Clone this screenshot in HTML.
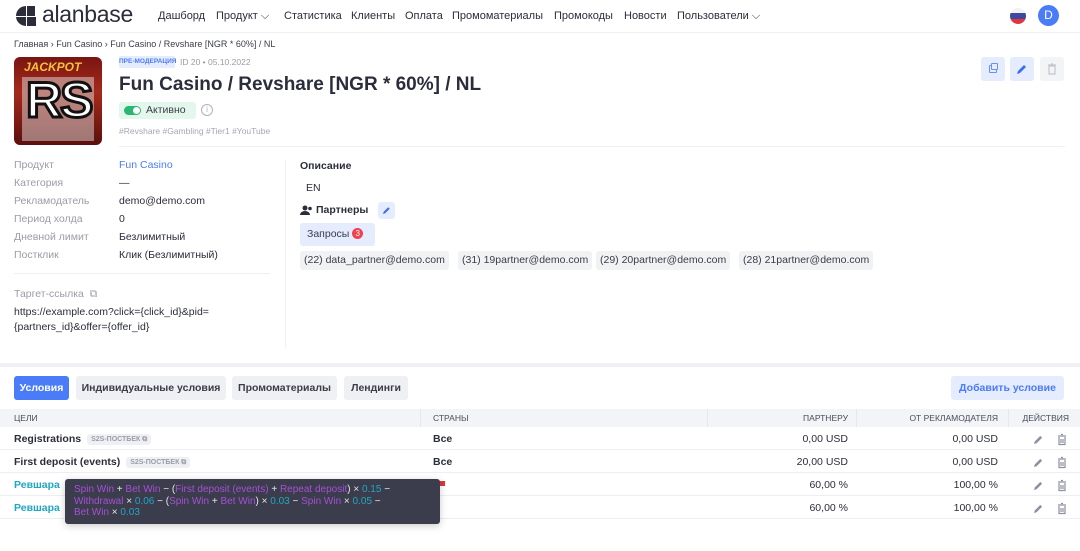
<!DOCTYPE html>
<html><head><meta charset="utf-8"><style>
*{box-sizing:border-box;margin:0;padding:0}
body{width:1080px;height:551px;overflow:hidden;background:#fff;font-family:"Liberation Sans",sans-serif;color:#2b2d3b;position:relative}
.a{position:absolute;white-space:nowrap}
.nav{font-size:11px;color:#2b2d3b;top:10px}
.lbl{font-size:10.5px;color:#9a9ca8;left:14px}
.val{font-size:10.5px;color:#2b2d3b;left:119px}
.chip{position:absolute;top:251px;height:19px;background:#f1f2f4;border-radius:3px;font-size:10.5px;line-height:19px;padding:0 4px;color:#3a3c48}
.tab{position:absolute;top:376px;height:24px;border-radius:3px;background:#eef0f3;font-size:10.5px;font-weight:bold;line-height:24px;text-align:center;color:#3a3c48}
.th{font-size:8.5px;color:#4a4c58;top:413px}
.row{position:absolute;left:0;width:1080px;height:23px;border-bottom:1px solid #eceef2}
.c{font-size:10.5px;top:6px;position:absolute;white-space:nowrap}
.pb{font-size:7px;font-weight:bold;color:#9a9ca8;background:#eef0f3;border-radius:3px;padding:2px 4px;margin-left:6px;vertical-align:1px}
.p{color:#a64fd6}.t{color:#1fa7c2}.w{color:#e6e6ee}
.ic{position:absolute;left:1033px;top:5px}
</style></head><body>
<div class="a" style="left:0;top:32px;width:1080px;height:1px;background:#eef0f3"></div>
<svg class="a" style="left:14px;top:5px" width="24" height="22" viewBox="0 0 24 22"><path d="M2 11a10 10 0 0 1 10-10v10z M13 1h8v10h-8z M2 12h10v9a10 10 0 0 1-10-9z M13 12h9v9h-9z" fill="#2b2d3b"/></svg>
<div class="a" style="left:42px;top:1px;font-size:23px;color:#2b2d3b;letter-spacing:-0.3px">alanbase</div>
<div class="a nav" style="left:158px">Дашборд</div>
<div class="a nav" style="left:216px">Продукт ⌵</div>
<div class="a nav" style="left:284px">Статистика</div>
<div class="a nav" style="left:351px">Клиенты</div>
<div class="a nav" style="left:405px">Оплата</div>
<div class="a nav" style="left:452px">Промоматериалы</div>
<div class="a nav" style="left:554px">Промокоды</div>
<div class="a nav" style="left:624px">Новости</div>
<div class="a nav" style="left:677px">Пользователи ⌵</div>
<div class="a" style="left:1010px;top:8px;width:16px;height:16px;border-radius:50%;overflow:hidden"><div style="height:5.3px;background:#f2f2f2"></div><div style="height:5.3px;background:#3b4aa0"></div><div style="height:5.4px;background:#e3343a"></div></div>
<div class="a" style="left:1038px;top:5px;width:21px;height:21px;border-radius:50%;background:#4a7cf7;color:#fff;font-size:12px;line-height:21px;text-align:center">D</div>
<div class="a" style="left:14px;top:39px;font-size:9px;color:#3a3c48">Главная › Fun Casino › Fun Casino / Revshare [NGR * 60%] / NL</div>
<div class="a" style="left:14px;top:57px;width:88px;height:88px;border-radius:6px;background:linear-gradient(#7a1512,#a52a1c 40%,#5c0f0c);overflow:hidden">
<div style="position:absolute;left:10px;top:3px;font-size:12px;font-weight:bold;color:#f3c23a;font-style:italic">JACKPOT</div>
<div style="position:absolute;left:8px;top:20px;width:72px;height:64px;background:#ddd;opacity:.5"></div>
<div style="position:absolute;left:12px;top:14px;font-size:50px;font-weight:bold;color:#fff;-webkit-text-stroke:3px #111;letter-spacing:-2px">RS</div>
</div>
<div class="a" style="left:119px;top:56px;height:12px;width:56px;background:#e5ecfd;color:#4a7cf7;font-size:6.5px;font-weight:bold;line-height:12px;border-radius:2px;text-align:center">ПРЕ-МОДЕРАЦИЯ</div>
<div class="a" style="left:180px;top:57px;font-size:8.5px;color:#9a9ca8">ID 20 • 05.10.2022</div>
<div class="a" style="left:119px;top:74px;font-size:19px;font-weight:bold;color:#2b2d3b">Fun Casino / Revshare [NGR * 60%] / NL</div>
<div class="a" style="left:119px;top:102px;width:77px;height:17px;background:#e3f7ec;border-radius:3px"><div style="position:absolute;left:5px;top:4px;width:17px;height:9px;border-radius:5px;background:#2bb673"></div><div style="position:absolute;left:14px;top:5px;width:7px;height:7px;border-radius:50%;background:#fff"></div><div style="position:absolute;left:27px;top:2px;font-size:10.5px;color:#3a3c48">Активно</div></div>
<div class="a" style="left:201px;top:104px;width:12px;height:12px;border:1px solid #b0b2bc;border-radius:50%;font-size:8px;line-height:10px;text-align:center;color:#b0b2bc">i</div>
<div class="a" style="left:119px;top:126px;font-size:8.5px;color:#a5a7b2">#Revshare #Gambling #Tier1 #YouTube</div>
<div class="a" style="left:119px;top:146px;width:946px;height:1px;background:#eef0f3"></div>
<div class="a" style="left:981px;top:57px;width:24px;height:24px;background:#e5ecfd;border-radius:3px"><div style="position:absolute;left:8px;top:8px;width:8px;height:8px;border:1.3px solid #6d8ff5;border-radius:1px"></div><div style="position:absolute;left:10px;top:6px;width:7px;height:7px;border:1.3px solid #6d8ff5;border-radius:1px;background:#e5ecfd"></div></div>
<div class="a" style="left:1010px;top:57px;width:24px;height:24px;background:#e5ecfd;border-radius:3px"><svg width="24" height="24" viewBox="0 0 24 24"><path d="M7 17l1-3 6-6 2 2-6 6z" fill="#3d6df0"/></svg></div>
<div class="a" style="left:1040px;top:57px;width:24px;height:24px;background:#f3f4f6;border-radius:3px"><svg width="24" height="24" viewBox="0 0 24 24"><path d="M9 9h6v8h-6z M8 8h8 M11 7h2" stroke="#c3c5cc" fill="none" stroke-width="1.2"/></svg></div>
<div class="a lbl" style="top:159px">Продукт</div><div class="a val" style="top:159px;color:#4a7cf7">Fun Casino</div>
<div class="a lbl" style="top:177px">Категория</div><div class="a val" style="top:177px">—</div>
<div class="a lbl" style="top:195px">Рекламодатель</div><div class="a val" style="top:195px">demo@demo.com</div>
<div class="a lbl" style="top:213px">Период холда</div><div class="a val" style="top:213px">0</div>
<div class="a lbl" style="top:231px">Дневной лимит</div><div class="a val" style="top:231px">Безлимитный</div>
<div class="a lbl" style="top:249px">Постклик</div><div class="a val" style="top:249px">Клик (Безлимитный)</div>
<div class="a" style="left:14px;top:273px;width:256px;height:1px;background:#eef0f3"></div>
<div class="a lbl" style="top:288px">Таргет-ссылка &nbsp;⧉</div>
<div class="a" style="left:14px;top:305px;font-size:10.5px;line-height:15px;color:#2b2d3b">https://example.com?click={click_id}&amp;pid=<br>{partners_id}&amp;offer={offer_id}</div>
<div class="a" style="left:285px;top:160px;width:1px;height:188px;background:#eef0f3"></div>
<div class="a" style="left:300px;top:160px;font-size:10.5px;font-weight:bold">Описание</div>
<div class="a" style="left:306px;top:182px;font-size:10.5px">EN</div>
<svg class="a" style="left:300px;top:205px" width="13" height="11" viewBox="0 0 13 11"><circle cx="5" cy="3" r="2.5" fill="#2b2d3b"/><path d="M0 10a5 4 0 0 1 10 0z" fill="#2b2d3b"/><circle cx="10" cy="3.5" r="1.8" fill="#2b2d3b"/></svg>
<div class="a" style="left:316px;top:204px;font-size:10.5px;font-weight:bold">Партнеры</div>
<div class="a" style="left:378px;top:202px;width:17px;height:17px;background:#e5ecfd;border-radius:3px"><svg width="17" height="17" viewBox="0 0 17 17"><path d="M5 12l.7-2.2 4.5-4.5 1.5 1.5-4.5 4.5z" fill="#3d6df0"/></svg></div>
<div class="a" style="left:300px;top:223px;width:75px;height:23px;background:#e5ecfd;border-radius:3px;font-size:10.5px;line-height:23px;padding-left:7px;color:#3a3c48">Запросы <span style="display:inline-block;width:11px;height:11px;border-radius:50%;background:#f0424e;color:#fff;font-size:8px;line-height:11px;text-align:center;vertical-align:1px">3</span></div>
<div class="chip" style="left:300px">(22) data_partner@demo.com</div>
<div class="chip" style="left:458px">(31) 19partner@demo.com</div>
<div class="chip" style="left:596px">(29) 20partner@demo.com</div>
<div class="chip" style="left:739px">(28) 21partner@demo.com</div>
<div class="a" style="left:0;top:363px;width:1080px;height:4px;background:#f0f1f4"></div>
<div class="tab" style="left:14px;width:55px;background:#4a7cf7;color:#fff">Условия</div>
<div class="tab" style="left:76px;width:150px">Индивидуальные условия</div>
<div class="tab" style="left:232px;width:105px">Промоматериалы</div>
<div class="tab" style="left:344px;width:64px">Лендинги</div>
<div class="tab" style="left:951px;width:113px;background:#e5ecfd;color:#4a7cf7">Добавить условие</div>
<div class="a" style="left:0;top:409px;width:1080px;height:18px;background:#f3f4f7"></div>
<div class="a" style="left:420px;top:409px;width:1px;height:18px;background:#e6e8ec"></div>
<div class="a" style="left:707px;top:409px;width:1px;height:18px;background:#e6e8ec"></div>
<div class="a" style="left:856px;top:409px;width:1px;height:18px;background:#e6e8ec"></div>
<div class="a" style="left:1008px;top:409px;width:1px;height:18px;background:#e6e8ec"></div>
<div class="a th" style="left:14px">ЦЕЛИ</div>
<div class="a th" style="left:433px">СТРАНЫ</div>
<div class="a th" style="right:232px">ПАРТНЕРУ</div>
<div class="a th" style="right:82px">ОТ РЕКЛАМОДАТЕЛЯ</div>
<div class="a th" style="right:11px">ДЕЙСТВИЯ</div>
<svg width="0" height="0" style="position:absolute"><defs><g id="acts"><path d="M1 12l.8-2.6 5.5-5.5 1.8 1.8-5.5 5.5z" fill="#8e90a0"/><path d="M25 4h8 M28 2.5h2 M26 5v7.5h6v-7.5 M28 7v4 M30 7v4" stroke="#8e90a0" stroke-width="1.2" fill="none"/></g></defs></svg>
<div class="row" style="top:427px"><span class="c" style="left:14px;font-weight:bold">Registrations<span class="pb">S2S-ПОСТБЕК ⧉</span></span><span class="c" style="left:433px;font-weight:bold">Все</span><span class="c" style="right:232px">0,00 USD</span><span class="c" style="right:82px">0,00 USD</span><svg class="ic" width="36" height="14"><use href="#acts"/></svg></div>
<div class="row" style="top:450px"><span class="c" style="left:14px;font-weight:bold">First deposit (events)<span class="pb">S2S-ПОСТБЕК ⧉</span></span><span class="c" style="left:433px;font-weight:bold">Все</span><span class="c" style="right:232px">20,00 USD</span><span class="c" style="right:82px">0,00 USD</span><svg class="ic" width="36" height="14"><use href="#acts"/></svg></div>
<div class="row" style="top:473px"><span class="c" style="left:14px;font-weight:bold;color:#1fa7c2">Ревшара</span><span class="c" style="left:437px;top:8px;width:8px;height:5px;background:#e3343a"></span><span class="c" style="right:232px">60,00 %</span><span class="c" style="right:82px">100,00 %</span><svg class="ic" width="36" height="14"><use href="#acts"/></svg></div>
<div class="row" style="top:496px"><span class="c" style="left:14px;font-weight:bold;color:#1fa7c2">Ревшара</span><span class="c" style="right:232px">60,00 %</span><span class="c" style="right:82px">100,00 %</span><svg class="ic" width="36" height="14"><use href="#acts"/></svg></div>
<div class="a" style="left:65px;top:479px;width:375px;height:45px;background:#3c3d4c;border-radius:3px;box-shadow:0 2px 8px rgba(0,0,0,.2);padding:5px 9px;font-size:10px;line-height:11.5px;white-space:normal">
<span class="p">Spin Win</span> <span class="w">+</span> <span class="p">Bet Win</span> <span class="w">− (</span><span class="p">First deposit (events)</span> <span class="w">+</span> <span class="p">Repeat deposit</span><span class="w">) ×</span> <span class="t">0.15</span> <span class="w">−</span><br><span class="p">Withdrawal</span> <span class="w">×</span> <span class="t">0.06</span> <span class="w">− (</span><span class="p">Spin Win</span> <span class="w">+</span> <span class="p">Bet Win</span><span class="w">) ×</span> <span class="t">0.03</span> <span class="w">−</span> <span class="p">Spin Win</span> <span class="w">×</span> <span class="t">0.05</span> <span class="w">−</span><br><span class="p">Bet Win</span> <span class="w">×</span> <span class="t">0.03</span>
</div>
</body></html>
